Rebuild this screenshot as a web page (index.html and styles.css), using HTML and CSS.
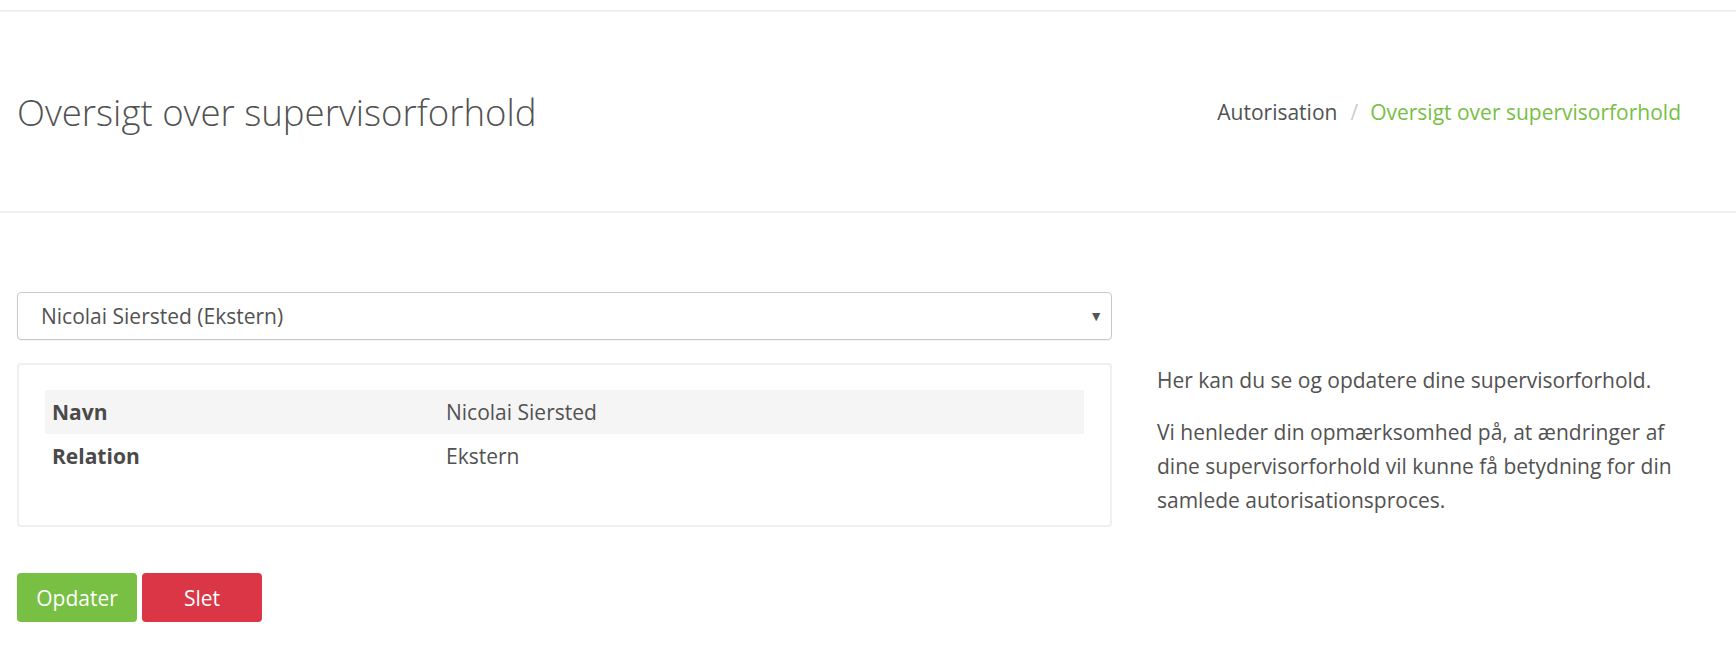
FILE: index.html
```html
<!DOCTYPE html>
<html lang="da">
<head>
<meta charset="utf-8">
<title>Oversigt over supervisorforhold</title>
<link rel="stylesheet" href="styles.css">
</head>
<body>
<div class="topbar"></div>
<header class="page-header">
  <h1 class="page-title">Oversigt over supervisorforhold</h1>
  <nav class="breadcrumb">
    <span class="crumb">Autorisation</span>
    <span class="sep">/</span>
    <span class="crumb active">Oversigt over supervisorforhold</span>
  </nav>
</header>
<main class="content">
  <section class="main-col">
    <div class="select">
      <span class="select-text">Nicolai Siersted (Ekstern)</span>
      <span class="select-arrow">▼</span>
    </div>
    <div class="panel">
      <table class="info">
        <tr class="striped"><th>Navn</th><td>Nicolai Siersted</td></tr>
        <tr><th>Relation</th><td>Ekstern</td></tr>
      </table>
    </div>
    <div class="actions">
      <button class="btn btn-green">Opdater</button>
      <button class="btn btn-red">Slet</button>
    </div>
  </section>
  <aside class="side-col">
    <p>Her kan du se og opdatere dine supervisorforhold.</p>
    <p>Vi henleder din opmærksomhed på, at ændringer af dine supervisorforhold vil kunne få betydning for din samlede autorisationsproces.</p>
  </aside>
</main>
</body>
</html>
```
FILE: styles.css
```css
* { box-sizing: border-box; }
html, body { margin: 0; padding: 0; background: #fff; }
body {
  font-family: "Open Sans", "Noto Sans", sans-serif;
  font-size: 21px;
  line-height: 1.45;
  color: #525252;
}
.topbar {
  height: 12px;
  border-bottom: 2px solid #efefef;
}
.page-header {
  height: 201px;
  border-bottom: 2px solid #efefef;
  display: flex;
  align-items: center;
  justify-content: space-between;
  padding: 2px 55px 0 17px;
}
.page-title {
  margin: 0;
  font-size: 36.6px;
  font-weight: 300;
  line-height: 1.2;
  color: #525252;
}
.breadcrumb {
  display: flex;
  align-items: center;
  font-size: 21px;
  color: #525252;
}
.sep {
  color: #ccc;
  padding: 0 12px 0 13px;
}
.crumb.active { color: #77c043; }
.content {
  display: grid;
  grid-template-columns: 1095px 1fr;
  column-gap: 45px;
  padding: 79px 55px 0 17px;
}
.select {
  height: 48px;
  border: 1px solid #c8c8c8;
  border-radius: 4px;
  display: flex;
  align-items: center;
  justify-content: space-between;
  padding: 0 8px 0 23px;
  box-shadow: 0 1px 1px rgba(0,0,0,0.05);
}
.select-text { color: #525252; }
.select-arrow {
  font-size: 14px;
  color: #555;
}
.panel {
  margin-top: 23px;
  border: 2px solid #efefef;
  border-radius: 4px;
  padding: 25px 26px 47px 26px;
}
.info {
  width: 100%;
  border-collapse: collapse;
}
.info th, .info td {
  text-align: left;
  padding: 7px 7px;
  line-height: 30px;
  vertical-align: middle;
}
.info th {
  width: 394px;
  font-weight: 700;
  color: #4a4a4a;
}
.info td { color: #525252; }
.info tr.striped { background: #f5f5f5; }
.actions {
  display: flex;
  gap: 5px;
  margin-top: 46px;
}
.btn {
  font-family: inherit;
  font-size: 21px;
  line-height: 30px;
  height: 49px;
  width: 120px;
  border: 0;
  border-radius: 4px;
  color: #fff;
  padding: 0;
}
.btn-green { background: #77c043; }
.btn-red { background: #da3645; }
.side-col {
  padding-top: 71px;
  line-height: 34px;
}
.side-col p { margin: 0 0 18px; }
```
